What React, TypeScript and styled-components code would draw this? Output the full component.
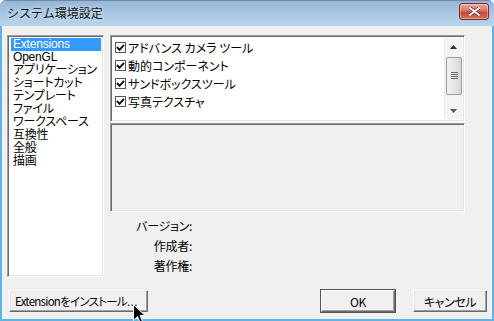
import { FC } from 'react'
import styled, { createGlobalStyle } from 'styled-components'

const GlobalStyle = createGlobalStyle`
  html, body {
    margin: 0;
    padding: 0;
    background: #ffffff;
  }
  body {
    font-family: "Noto Sans CJK JP", "Liberation Sans", sans-serif;
    font-size: 12px;
    color: #000;
  }
`

const Window = styled.div`
  position: relative;
  width: 494px;
  height: 321px;
  display: flex;
  flex-direction: column;
  background: #5db4e6;
  border-radius: 6px 6px 0 0;
  overflow: hidden;
  box-sizing: border-box;
`

const TitleBar = styled.div`
  height: 26px;
  display: flex;
  align-items: center;
  justify-content: space-between;
  padding: 0 5px 0 7px;
  background: linear-gradient(to bottom, #97b6d6 0%, #a7c5e2 40%, #b8d4ec 100%);
  border-top: 1px solid #6f8aa6;
  box-sizing: border-box;
`

const Title = styled.div`
  font-size: 12px;
  line-height: 14px;
  color: #111;
  margin-top: -2px;
  text-shadow: 0 0 4px rgba(255, 255, 255, 0.7);
`

const CloseButton = styled.div`
  width: 30px;
  height: 17px;
  margin-top: -4px;
  border: 1px solid #7e2b24;
  border-radius: 3px;
  background: linear-gradient(to bottom, #e9a99f 0%, #d67565 45%, #c34a38 55%, #d6705d 100%);
  box-shadow: inset 0 0 0 1px rgba(255, 255, 255, 0.35);
  display: flex;
  align-items: center;
  justify-content: center;
  box-sizing: border-box;
`

const Client = styled.div`
  flex: 1;
  margin: 0 2px 2px 2px;
  background: #f0f0f0;
  padding: 9px 5px 7px 5px;
  display: flex;
  flex-direction: column;
  box-sizing: border-box;
`

const Body = styled.div`
  display: flex;
  gap: 6px;
  height: 242px;
`

const sunken = `
  border-top: 1px solid #a0a0a0;
  border-left: 1px solid #a0a0a0;
  border-right: 1px solid #ffffff;
  border-bottom: 1px solid #ffffff;
  box-shadow: inset 1px 1px 0 #696969, inset -1px -1px 0 #e3e3e3;
  box-sizing: border-box;
`

const ListBox = styled.div`
  ${sunken}
  width: 97px;
  height: 242px;
  background: #fff;
  padding: 2px 2px;
`

const ListItem = styled.div<{ $selected?: boolean }>`
  height: 13px;
  line-height: 13px;
  padding-left: 2px;
  margin-left: 1px;
  white-space: nowrap;
  font-family: "Liberation Sans", "Noto Sans CJK JP", sans-serif;
  letter-spacing: -0.2px;
  font-feature-settings: "palt" 1;
  background: ${(p) => (p.$selected ? '#3399ff' : 'transparent')};
  color: ${(p) => (p.$selected ? '#fff' : '#000')};
`

const RightColumn = styled.div`
  width: 355px;
  display: flex;
  flex-direction: column;
`

const CheckList = styled.div`
  ${sunken}
  height: 87px;
  background: #fff;
  display: flex;
  padding: 2px 2px 2px 2px;
`

const CheckRows = styled.div`
  flex: 1;
`

const CheckRow = styled.div`
  height: 18px;
  display: flex;
  align-items: center;
  gap: 2px;
  padding-left: 2px;
  font-feature-settings: "palt" 1;
  white-space: nowrap;
`

const CheckBox = styled.div`
  width: 11px;
  height: 11px;
  border: 1px solid #555;
  background: #fff;
  box-sizing: border-box;
  display: flex;
  align-items: center;
  justify-content: center;
`

const ScrollBar = styled.div`
  width: 17px;
  display: flex;
  flex-direction: column;
  background: #f4f4f4;
  border-left: 1px solid #ececec;
`

const ArrowButton = styled.div`
  height: 17px;
  display: flex;
  align-items: center;
  justify-content: center;
`

const Track = styled.div`
  flex: 1;
  display: flex;
  flex-direction: column;
  justify-content: center;
  padding: 0 0 0 1px;
`

const Thumb = styled.div`
  height: 38px;
  margin-top: -6px;
  border: 1px solid #9a9a9a;
  border-radius: 2px;
  background: linear-gradient(to right, #f3f3f3, #e4e4e4 60%, #d6d6d6);
  display: flex;
  flex-direction: column;
  align-items: center;
  justify-content: center;
  gap: 1px;
  box-sizing: border-box;
`

const Grip = styled.div`
  width: 7px;
  height: 1px;
  background: #6a6a6a;
`

const DescBox = styled.div`
  ${sunken}
  height: 89px;
  margin-top: 1px;
  background: #f0f0f0;
`

const InfoGrid = styled.div`
  display: grid;
  grid-template-columns: 82px 1fr;
  grid-auto-rows: 20px;
  margin-top: 4px;
`

const InfoLabel = styled.div`
  text-align: right;
  line-height: 20px;
  letter-spacing: -0.3px;
  font-feature-settings: "palt" 1;
  white-space: nowrap;
`

const Footer = styled.div`
  display: flex;
  align-items: center;
  margin-top: 13px;
  padding-left: 2px;
`

const Button = styled.div<{ $width: number; $default?: boolean }>`
  width: ${(p) => p.$width}px;
  height: 22px;
  display: flex;
  align-items: center;
  justify-content: center;
  background: #f0f0f0;
  border: 1px solid;
  border-color: #ffffff #696969 #696969 #ffffff;
  box-shadow: ${(p) =>
    p.$default
      ? '0 0 0 1px #555, inset -1px -1px 0 #a0a0a0'
      : 'inset -1px -1px 0 #a0a0a0, inset 1px 1px 0 #e3e3e3'};
  box-sizing: border-box;
  white-space: nowrap;
  letter-spacing: -0.4px;
  font-feature-settings: "palt" 1;
`

const InstallButton = styled(Button)`
  justify-content: flex-start;
  padding-left: 5px;
  font-size: 11.5px;
  letter-spacing: -0.75px;
`

const Dots = styled.span`
  letter-spacing: 0.5px;
`

const Spacer = styled.div`
  flex: 1;
`

const CancelButton = styled(Button)`
  margin-left: 18px;
`

const Cursor = styled.svg`
  position: absolute;
  left: 133px;
  top: 304px;
`

const checks = ['アドバンス カメラ ツール', '動的コンポーネント', 'サンドボックスツール', '写真テクスチャ']
const categories = [
  'Extensions',
  'OpenGL',
  'アプリケーション',
  'ショートカット',
  'テンプレート',
  'ファイル',
  'ワークスペース',
  '互換性',
  '全般',
  '描画',
]

const App: FC = () => {
  return (
    <>
      <GlobalStyle />
      <Window>
        <TitleBar>
          <Title>システム環境設定</Title>
          <CloseButton>
            <svg width="11" height="9" viewBox="0 0 11 9">
              <path d="M1 1 L10 8 M10 1 L1 8" stroke="#5a1a14" strokeWidth="3.2" strokeLinecap="round" />
              <path d="M1 1 L10 8 M10 1 L1 8" stroke="#fff" strokeWidth="2" strokeLinecap="round" />
            </svg>
          </CloseButton>
        </TitleBar>
        <Client>
          <Body>
            <ListBox>
              {categories.map((c, i) => (
                <ListItem key={c} $selected={i === 0}>
                  {c}
                </ListItem>
              ))}
            </ListBox>
            <RightColumn>
              <CheckList>
                <CheckRows>
                  {checks.map((c) => (
                    <CheckRow key={c}>
                      <CheckBox>
                        <svg width="9" height="9" viewBox="0 0 9 9">
                          <path d="M1 4 L3.5 6.8 L8 1.8" stroke="#111" strokeWidth="2" fill="none" />
                        </svg>
                      </CheckBox>
                      {c}
                    </CheckRow>
                  ))}
                </CheckRows>
                <ScrollBar>
                  <ArrowButton>
                    <svg width="7" height="4" viewBox="0 0 7 4">
                      <path d="M0 4 L3.5 0 L7 4 Z" fill="#333" />
                    </svg>
                  </ArrowButton>
                  <Track>
                    <Thumb>
                      <Grip />
                      <Grip />
                      <Grip />
                      <Grip />
                    </Thumb>
                  </Track>
                  <ArrowButton>
                    <svg width="7" height="4" viewBox="0 0 7 4">
                      <path d="M0 0 L7 0 L3.5 4 Z" fill="#555" />
                    </svg>
                  </ArrowButton>
                </ScrollBar>
              </CheckList>
              <DescBox />
              <InfoGrid>
                <InfoLabel>バージョン:</InfoLabel>
                <div />
                <InfoLabel>作成者:</InfoLabel>
                <div />
                <InfoLabel>著作権:</InfoLabel>
                <div />
              </InfoGrid>
            </RightColumn>
          </Body>
          <Footer>
            <InstallButton $width={139}>
              Extensionをインストール<Dots>...</Dots>
            </InstallButton>
            <Spacer />
            <Button $width={74} $default>
              OK
            </Button>
            <CancelButton $width={74}>キャンセル</CancelButton>
          </Footer>
        </Client>
        <Cursor width="13" height="21" viewBox="0 0 13 21">
          <path d="M0.5 0.5 L0.5 16.5 L4.5 12.5 L7.5 19.5 L10 18.5 L7 11.5 L12 11.5 Z" fill="#000" stroke="#fff" strokeWidth="1" />
        </Cursor>
      </Window>
    </>
  )
}

export default App
